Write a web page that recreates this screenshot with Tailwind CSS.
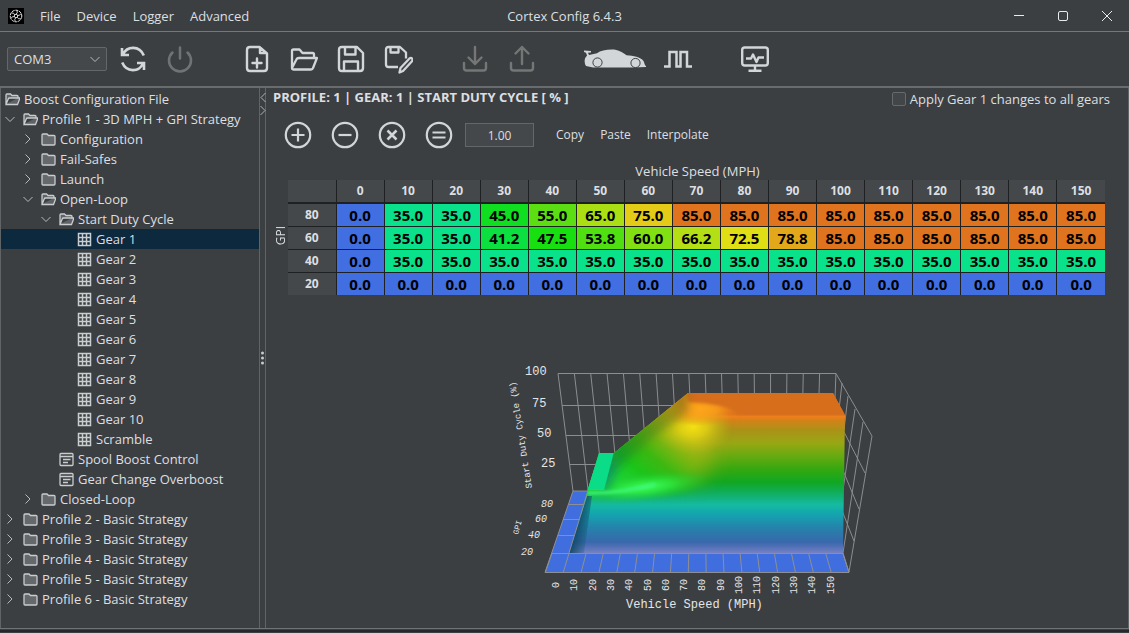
<!DOCTYPE html>
<html lang="en">
<head>
  <meta charset="UTF-8">
  <meta name="viewport" content="width=device-width, initial-scale=1.0">
  <title>Cortex Config 6.4.3</title>
  <script src="https://cdn.jsdelivr.net/npm/@tailwindcss/browser@4"></script>
</head>
<body class="h-screen flex flex-col overflow-hidden bg-[#3c3f41] text-[#dcdfe1] font-['Open_Sans','Noto_Sans',sans-serif] text-[13px] leading-5">
  <!-- Title bar -->
  <header class="relative h-8 shrink-0 flex items-center border-b border-[#75787a]">
    <svg class="ml-2 mr-4 size-4" viewBox="0 0 16 16" fill="none" stroke="#e6e8ea">
      <rect width="16" height="16" fill="#000" stroke="none"/>
      <circle cx="8" cy="8" r="5.8" stroke-dasharray="3 .7"/>
      <circle cx="8" cy="8" r="1.7" stroke-width=".9"/>
      <path d="M8 6.3Q10 5 9 2.4M9.500 7.500Q11.800 8 13 5.500M9.300 9.200Q10 11.500 12.800 10.800M7.800 9.700Q6 11 7.200 13.600M6.400 8.600Q4 8 3 10.500M6.700 6.900Q6 4.500 3.400 5" stroke-width=".9"/>
    </svg>
    <nav class="flex gap-4">
      <button>File</button>
      <button>Device</button>
      <button>Logger</button>
      <button>Advanced</button>
    </nav>
    <h1 class="absolute left-1/2 -translate-x-1/2">Cortex Config 6.4.3</h1>
    <div class="ml-auto flex">
      <button aria-label="Minimize" class="w-11 h-7 grid place-items-center"><svg class="size-3" viewBox="0 0 12 12" stroke="#e8eaec" fill="none"><path d="M1 5.500h10"/></svg></button>
      <button aria-label="Maximize" class="w-11 h-7 grid place-items-center"><svg class="size-3" viewBox="0 0 12 12" stroke="#e8eaec" fill="none"><rect x="1.500" y="1.500" width="9" height="9" rx="1.500"/></svg></button>
      <button aria-label="Close" class="w-11 h-7 grid place-items-center"><svg class="size-3" viewBox="0 0 12 12" stroke="#e8eaec" fill="none"><path d="M1 1l10 10M11 1L1 11"/></svg></button>
    </div>
  </header>

  <!-- Toolbar -->
  <div class="h-14 shrink-0 flex items-center border-b-2 border-[#696c6e] text-[#d2d6d9]">
    <div class="relative ml-[7px] mr-[2px]">
      <select aria-label="Port" class="appearance-none w-[100px] h-6 pl-[6px] rounded-[2px] border border-[#646668] bg-[#45484a] text-[13px] leading-5 text-[#dcdfe1]"><option>COM3</option></select>
      <svg class="absolute right-1.5 top-1.5 size-3 pointer-events-none" viewBox="0 0 12 12" fill="none" stroke="#b8bbbd"><path d="M1.500 4L6 8.500L10.500 4"/></svg>
    </div>
    <button aria-label="Refresh" class="w-[47px] grid place-items-center"><svg class="size-7" viewBox="0 0 28 28" fill="none" stroke="currentColor" stroke-width="2.600"><path d="M3 3v7h7M4 9.500C8 .8 20.500 .3 24.800 10.500M25 25v-7h-7M24 18.500C20 27.200 7.500 27.700 3.200 17.500"/></svg></button>
    <button aria-label="Connect" disabled class="w-[47px] grid place-items-center text-[#717273]"><svg class="size-7" viewBox="0 0 28 28" fill="none" stroke="currentColor" stroke-width="2.500" stroke-linecap="round"><path d="M14 2.500v11M6.500 7.500A11 11 0 1 0 21.500 7.500"/></svg></button>
    <button aria-label="New file" class="ml-[30px] w-[47px] grid place-items-center"><svg class="size-7" viewBox="0 0 28 28" fill="none" stroke="currentColor" stroke-width="2.400" stroke-linejoin="round" stroke-linecap="round"><path d="M16.500 2H7Q4 2 4 5v18q0 3 3 3h14q3 0 3-3V8.500zM17 2.500V8h6.500M14 13.500v9M9.500 18h9"/></svg></button>
    <button aria-label="Open file" class="w-[47px] grid place-items-center"><svg class="size-7" viewBox="0 0 28 28" fill="none" stroke="currentColor" stroke-width="2.300" stroke-linejoin="round"><path d="M2 23V6q0-1.500 1.500-1.500h6L12.500 8h10q1.500 0 1.500 1.500v3M2 23q0 1.500 2 1.500h17q1.500 0 2-1.500l4-10H9q-2 0-2.600 1.500z"/></svg></button>
    <button aria-label="Save" class="w-[47px] grid place-items-center"><svg class="size-7" viewBox="0 0 28 28" fill="none" stroke="currentColor" stroke-width="2.400" stroke-linejoin="round"><path d="M5 2h15l6 6v15q0 3-3 3H5q-3 0-3-3V5q0-3 3-3zM8 2v7.500h10.500V2M7 26V16.500h14V26"/></svg></button>
    <button aria-label="Save as" class="w-[47px] grid place-items-center"><svg class="size-[30px]" viewBox="0 0 30 30" fill="none" stroke="currentColor" stroke-width="2.300" stroke-linejoin="round"><path d="M15 23H5.500Q3 23 3 20.500v-15Q3 3 5.500 3H17l6 5.500v6M7.500 3v5.500h8V3M16.500 28.500l1-4.500L26.500 14.500q1.500-1.200 2.500 0t0 2.800L20 27z"/></svg></button>
    <button aria-label="Download" disabled class="ml-[30px] w-[47px] grid place-items-center text-[#757676]"><svg class="size-7" viewBox="0 0 28 28" fill="none" stroke="currentColor" stroke-width="2.400" stroke-linejoin="round" stroke-linecap="round"><path d="M14 2v17M7.500 12.500L14 19l6.500-6.500M3 18v5q0 2.500 2.500 2.500h17q2.500 0 2.500-2.500v-5"/></svg></button>
    <button aria-label="Upload" disabled class="w-[47px] grid place-items-center text-[#757676]"><svg class="size-7" viewBox="0 0 28 28" fill="none" stroke="currentColor" stroke-width="2.400" stroke-linejoin="round" stroke-linecap="round"><path d="M14 19V2M7.500 8.500L14 2l6.500 6.500M3 18v5q0 2.500 2.500 2.500h17q2.500 0 2.500-2.500v-5"/></svg></button>
    <button aria-label="Vehicle" class="ml-[39px]"><svg class="w-[62px] h-5" viewBox="0 0 62 20" fill="currentColor"><path d="M0 1.500l7 .5v1.500l-3 .2 1 2.300 8-1.800Q18 .5 28 .5c6 0 10 2.500 14.500 5.800 7 .4 14 1.700 17 5.700 1 1.500.8 4 2.500 5.200V18L48 18.500H9L2 17Q-.3 13 1.200 9L3 6.500 2 3.700 0 3z"/><circle cx="13.500" cy="13.500" r="4.600" stroke="#3c3f41"/><circle cx="51.500" cy="14" r="4.600" stroke="#3c3f41"/></svg></button>
    <button aria-label="Signal" class="ml-[8px] w-[47px] grid place-items-center"><svg class="size-7" viewBox="0 0 28 28" fill="none" stroke="currentColor" stroke-width="2.500"><path d="M0 21.500h5.500V7h7v14.500h4V7h6.500v14.500h5"/></svg></button>
    <button aria-label="Live view" class="ml-[30px] w-[47px] grid place-items-center"><svg class="size-7" viewBox="0 0 28 28" fill="none" stroke="currentColor" stroke-width="2.400" stroke-linejoin="round"><rect x="1.200" y="2.500" width="25.600" height="18" rx="2.500"/><path d="M14 20.500v5M7.500 25.800h13M5 13.500h5l2-4 3.500 7.500 2-4.500h5.500"/></svg></button>
  </div>

  <main class="flex-1 min-h-0 flex">
    <!-- Configuration tree -->
    <aside class="w-[260px] shrink-0 border-x border-[#616466] pt-px">
      <ul id="tree"></ul>
    </aside>
    <div class="relative w-[5px] shrink-0">
      <svg class="absolute left-0 top-1 w-[6px] h-6" viewBox="0 0 6 24" fill="none" stroke="#b0b3b5"><path d="M5.500 1L1 5.500L5.500 10M.5 14L5 18.500L.5 23"/></svg>
      <svg class="absolute left-0 top-1/2 w-[5px] h-4 -translate-y-1/2" viewBox="0 0 5 16" fill="#c8cbcd"><circle cx="2.500" cy="3" r="1.500"/><circle cx="2.500" cy="8" r="1.500"/><circle cx="2.500" cy="13" r="1.500"/></svg>
    </div>

    <!-- Map editor -->
    <section class="flex-1 min-w-0 flex flex-col border-x border-[#616466]">
      <div class="flex justify-between items-start pl-[7px] pr-[18px]">
        <h2 class="font-bold leading-[18px]">PROFILE: 1 | GEAR: 1 | START DUTY CYCLE [ % ]</h2>
        <label class="flex items-center gap-1 pt-px"><input type="checkbox" class="appearance-none size-[14px] rounded-[2px] border border-[#67696b] bg-[#434648]">Apply Gear 1 changes to all gears</label>
      </div>
      <div class="mt-3 pl-[18px] flex items-center text-[12px]">
        <div class="flex gap-[19px] mr-3">
          <button aria-label="Add"><svg class="size-7" viewBox="0 0 28 28" fill="none" stroke="#d2d6d9" stroke-width="2.200"><circle cx="14" cy="14" r="12.200"/><path d="M14 7.500v13M7.500 14h13"/></svg></button>
          <button aria-label="Subtract"><svg class="size-7" viewBox="0 0 28 28" fill="none" stroke="#d2d6d9" stroke-width="2.200"><circle cx="14" cy="14" r="12.200"/><path d="M7.500 14h13"/></svg></button>
          <button aria-label="Multiply"><svg class="size-7" viewBox="0 0 28 28" fill="none" stroke="#d2d6d9" stroke-width="2.500"><circle cx="14" cy="14" r="12.200" stroke-width="2.200"/><path d="M9.500 9.500l9 9M18.500 9.500l-9 9"/></svg></button>
          <button aria-label="Set"><svg class="size-7" viewBox="0 0 28 28" fill="none" stroke="#d2d6d9" stroke-width="2.200"><circle cx="14" cy="14" r="12.200"/><path d="M7.500 11.500h13M7.500 16.500h13"/></svg></button>
        </div>
        <input aria-label="Amount" value="1.00" class="w-[69px] h-6 text-center border border-[#646668] bg-[#45484a]">
        <button class="ml-[22px]">Copy</button>
        <button class="ml-4">Paste</button>
        <button class="ml-4">Interpolate</button>
      </div>

      <div class="mt-[11px] pl-[7px] pr-[23px]">
        <p class="h-5 pl-[17px] text-center leading-[22px]">Vehicle Speed (MPH)</p>
        <div class="flex">
          <div class="w-[15px] shrink-0 flex items-center justify-center pb-1"><span class="[writing-mode:vertical-rl] rotate-180 text-[12px] leading-[15px]">GPI</span></div>
          <table class="w-full table-fixed border-collapse text-center font-bold">
            <thead id="speeds" class="text-[12px]"></thead>
            <tbody id="duty" class="text-[15px]"></tbody>
          </table>
        </div>
      </div>

      <!-- 3D surface -->
      <div class="flex-1 min-h-0 flex items-end justify-center pb-2">
        <svg class="w-[395px] h-[265px]" viewBox="500 355 395 265" fill="none" role="img" aria-label="Start duty cycle surface">
          <defs>
            <linearGradient id="body" gradientUnits="userSpaceOnUse" x1="0" y1="393" x2="0" y2="555">
              <stop offset="0" stop-color="#d66e1b"/><stop offset=".13" stop-color="#d66e1b"/>
              <stop offset=".145" stop-color="#ee7f1d"/><stop offset=".17" stop-color="#d28219"/><stop offset=".23" stop-color="#aa9217"/>
              <stop offset=".31" stop-color="#98a714"/><stop offset=".39" stop-color="#66aa10"/>
              <stop offset=".47" stop-color="#36a810"/><stop offset=".55" stop-color="#10a722"/>
              <stop offset=".61" stop-color="#10ad58"/><stop offset=".69" stop-color="#15baa2"/>
              <stop offset=".75" stop-color="#14a3af"/><stop offset=".83" stop-color="#2583ab"/>
              <stop offset=".92" stop-color="#3868ac"/><stop offset=".97" stop-color="#6578be"/><stop offset="1" stop-color="#8987bc"/>
            </linearGradient>
            <linearGradient id="ramp" gradientUnits="userSpaceOnUse" x1="625" y1="490" x2="686" y2="415">
              <stop offset="0" stop-color="#1fd83a"/><stop offset=".25" stop-color="#1cc41a"/>
              <stop offset=".45" stop-color="#3cb812"/><stop offset=".65" stop-color="#80b612"/>
              <stop offset=".85" stop-color="#bdb915"/><stop offset="1" stop-color="#d2ae18"/>
            </linearGradient>
            <linearGradient id="edge" gradientUnits="userSpaceOnUse" x1="605" y1="470" x2="690" y2="400">
              <stop offset="0" stop-color="#0f8f6a"/><stop offset=".2" stop-color="#159626"/>
              <stop offset=".45" stop-color="#3e9613"/><stop offset=".8" stop-color="#948c16"/><stop offset="1" stop-color="#a86a18"/>
            </linearGradient>
            <linearGradient id="side" gradientUnits="userSpaceOnUse" x1="576" y1="520" x2="596" y2="525">
              <stop offset="0" stop-color="#104565"/><stop offset="1" stop-color="#135875" stop-opacity="0"/>
            </linearGradient>
            <radialGradient id="gold"><stop offset="0" stop-color="#f4e112"/><stop offset=".35" stop-color="#e2d314" stop-opacity=".8"/><stop offset="1" stop-color="#a8b814" stop-opacity="0"/></radialGradient>
            <radialGradient id="amber"><stop offset="0" stop-color="#ffa51c"/><stop offset=".4" stop-color="#ff9c1b" stop-opacity=".8"/><stop offset="1" stop-color="#ee7e1b" stop-opacity="0"/></radialGradient>
            <radialGradient id="lime"><stop offset="0" stop-color="#3dff63"/><stop offset=".4" stop-color="#30ee45" stop-opacity=".7"/><stop offset="1" stop-color="#20c030" stop-opacity="0"/></radialGradient>
            <filter id="soft" filterUnits="userSpaceOnUse" x="500" y="355" width="395" height="265"><feGaussianBlur stdDeviation="12 6"/></filter>
            <filter id="mid" filterUnits="userSpaceOnUse" x="500" y="355" width="395" height="265"><feGaussianBlur stdDeviation="4"/></filter>
            <filter id="fine" filterUnits="userSpaceOnUse" x="500" y="355" width="395" height="265"><feGaussianBlur stdDeviation="1.500"/></filter>
            <mask id="fade" maskUnits="userSpaceOnUse" x="500" y="355" width="395" height="265"><path d="M560 350H705V470L690 490L560 494z" fill="#fff" filter="url(#soft)"/></mask>
            <clipPath id="shape"><path d="M599 453H614L688 393H833L845 415L843 553H569L587 492z"/></clipPath>
          </defs>
          <path d="M573 491H588L569 553H843L849 572H545z" fill="#416edf"/>
          <path id="wall" stroke="#8b8d8f"/>
          <g clip-path="url(#shape)">
            <rect x="560" y="390" width="290" height="170" fill="url(#body)"/>
            <rect x="560" y="390" width="200" height="130" fill="url(#ramp)" mask="url(#fade)"/>
            <ellipse cx="646" cy="487" rx="66" ry="15" fill="url(#lime)" transform="rotate(-7 646 487)"/>
            <ellipse cx="693" cy="427" rx="40" ry="28" fill="url(#gold)"/>
            <ellipse cx="700" cy="409" rx="44" ry="17" fill="url(#amber)"/>
            <path d="M685 388H848V414H738Q730 404 688 402z" fill="#d66e1b" filter="url(#fine)"/>
            <path d="M688 385V412L655 436L620 466L604 494L590 460z" fill="url(#edge)" opacity=".85" filter="url(#mid)"/>
            <path d="M599 452H614L604 490H586z" fill="#0bdc87"/>
            <path d="M587 493Q620 494 655 484" stroke="#3cf676" stroke-width="3" filter="url(#fine)"/>
            <path d="M587 496L569 553H584L592 496z" fill="url(#side)"/>
          </g>
          <path id="floor" stroke="#8e8f90"/>
          <g id="labels" fill="#e4e6e8" class="font-['Liberation_Mono',monospace]"></g>
        </svg>
      </div>
    </section>
  </main>
  <footer class="h-[5px] shrink-0 border-t border-[#707375]"><div class="mt-px h-[2px] border-y border-[#252729]"></div></footer>

  <script>
    const icons = {
      closed: '<path d="M1 12V3q0-1 1-1h4l1.500 1.500H13q1 0 1 1V12q0 1-1 1H2q-1 0-1-1z" fill="#66696c"/>',
      open: '<path d="M1 12V3q0-1 1-1h3.500L7 3.500h5q1 0 1 1V6M1 12.500h11.500L15 6H4.500q-1 0-1.300 1z" fill="#606366"/>',
      grid: '<path d="M1.500 1.500h12v12h-12zM5.500 1.500v12M9.500 1.500v12M1.500 5.500h12M1.500 9.500h12" stroke-width="1.500"/>',
      form: '<rect x="1" y="1.500" width="13" height="12" rx="1"/><path d="M1 4.500h13M4 7.500h7.500M4 10.500h5"/>'
    };
    const arrows = {
      down: '<path d="M1.500 4L6 8.500L10.500 4"/>',
      right: '<path d="M3.500 1.500L8 6L3.500 10.500"/>',
      none: ''
    };
    const pads = ["pl-1", "pl-[3px]", "pl-[21px]", "pl-[39px]", "pl-[57px]"];

    // [level, arrow, icon, label]
    const tree = [
      [0, "none", "open", "Boost Configuration File"],
      [1, "down", "open", "Profile 1 - 3D MPH + GPI Strategy"],
      [2, "right", "closed", "Configuration"],
      [2, "right", "closed", "Fail-Safes"],
      [2, "right", "closed", "Launch"],
      [2, "down", "open", "Open-Loop"],
      [3, "down", "open", "Start Duty Cycle"]
    ];
    for (let g = 1; g <= 10; g++) tree.push([4, "none", "grid", "Gear " + g]);
    tree.push([4, "none", "grid", "Scramble"]);
    tree.push([3, "none", "form", "Spool Boost Control"]);
    tree.push([3, "none", "form", "Gear Change Overboost"]);
    tree.push([2, "right", "closed", "Closed-Loop"]);
    for (let p = 2; p <= 6; p++) tree.push([1, "right", "closed", `Profile ${p} - Basic Strategy`]);

    document.getElementById("tree").innerHTML = tree.map(([level, arrow, icon, label]) => `
      <li class="h-5 flex items-center whitespace-nowrap ${pads[level]} ${label === "Gear 1" ? "bg-[#0d293e]" : ""}">
        ${level ? `<svg class="size-3 mr-[7px] shrink-0" viewBox="0 0 12 12" fill="none" stroke="#b8bbbd">${arrows[arrow]}</svg>` : ""}
        <svg class="size-[15px] mr-1 shrink-0" viewBox="0 0 15 15" fill="none" stroke="#c9cdd0" stroke-width="1.300">${icons[icon]}</svg>
        <span>${label}</span>
      </li>`).join("");

    const colors = {
      "0.0": "#416ee1", "35.0": "#09e28a", "41.2": "#0cdf40", "45.0": "#0fdf20", "47.5": "#18df10",
      "53.8": "#50df11", "55.0": "#5cdf12", "60.0": "#82df12", "65.0": "#aadf13", "66.2": "#b4df14",
      "72.5": "#e0df15", "75.0": "#e3cb17", "78.8": "#e2a819", "85.0": "#e0731d"
    };
    const rows = {
      80: "0.0 35.0 35.0 45.0 55.0 65.0 75.0 85.0 85.0 85.0 85.0 85.0 85.0 85.0 85.0 85.0",
      60: "0.0 35.0 35.0 41.2 47.5 53.8 60.0 66.2 72.5 78.8 85.0 85.0 85.0 85.0 85.0 85.0",
      40: "0.0 35.0 35.0 35.0 35.0 35.0 35.0 35.0 35.0 35.0 35.0 35.0 35.0 35.0 35.0 35.0",
      20: "0.0 0.0 0.0 0.0 0.0 0.0 0.0 0.0 0.0 0.0 0.0 0.0 0.0 0.0 0.0 0.0"
    };
    const speeds = Array.from({ length: 16 }, (_, i) => i * 10);
    document.getElementById("speeds").innerHTML =
      '<tr class="h-[23px] bg-[#45484a] border-b-2 border-[#1e2022]"><td></td>' +
      speeds.map(s => `<th class="border-l border-[#1e2022]">${s}</th>`).join("") + "</tr>";
    document.getElementById("duty").innerHTML = [80, 60, 40, 20].map(g => `
      <tr class="h-[23px] border-t border-[#1e2022]">
        <th class="bg-[#45484a] text-[12px] leading-5">${g}</th>
        ${rows[g].split(" ").map(v => `<td class="border-l border-[#1e2022] text-black leading-5" style="background:${colors[v]}">${v}</td>`).join("")}
      </tr>`).join("");

    // grid lines of the plot box
    let wall = "M573 491L558 373.500H836L872 436L849 572M562 405.500H690M566 435.500H640M570 464.500H600M573 491H588";
    for (let i = 1; i < 18; i++) wall += `M${558 + i * 16.35} 373.500L${573 + i * 15.2} 491`;
    wall += "M842 383L839 410M848 396L844 430M855 409L843 490M863 422L843 553M843 430L865 473M842 468L859 509M841 508L854 541";
    document.getElementById("wall").setAttribute("d", wall);
    let floor = "M573 491L545 572.500H849L843 553M588 491L569 553M569 504.500H583M563 519.500H579M558 535.500H574M552 553.500H843";
    for (let i = 0; i < 18; i++) floor += `M${552 + i * 17.1} 553L${545.5 + i * 17.85} 572`;
    document.getElementById("floor").setAttribute("d", floor);

    let labels = `
      <text x="525" y="375" font-size="12">100</text>
      <text x="532" y="407" font-size="12">75</text>
      <text x="537" y="437" font-size="12">50</text>
      <text x="541" y="467" font-size="12">25</text>
      <g font-size="10" font-style="italic">
        <text x="541" y="507">80</text><text x="535" y="522">60</text>
        <text x="528" y="538">40</text><text x="521" y="555">20</text>
      </g>
      <text font-size="9" transform="translate(532 488) rotate(-99)">Start Duty Cycle (%)</text>
      <text font-size="8" transform="translate(518 535) rotate(-75)">GPI</text>
      <text x="626" y="608" font-size="12">Vehicle Speed (MPH)</text>`;
    speeds.forEach((s, i) => {
      labels += `<text font-size="10" text-anchor="middle" transform="translate(${559 + i * 18.3} 585) rotate(-90)">${s}</text>`;
    });
    document.getElementById("labels").innerHTML = labels;
  </script>
</body>
</html>
